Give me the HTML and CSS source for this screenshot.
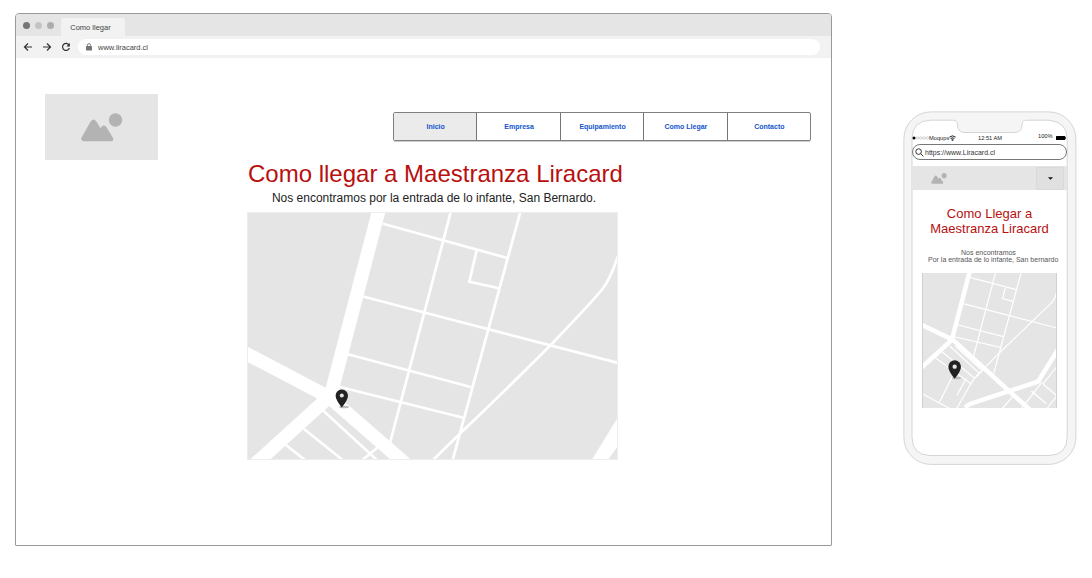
FILE: index.html
```html
<!DOCTYPE html>
<html lang="es">
<head>
<meta charset="utf-8">
<title>Como llegar</title>
<link rel="stylesheet" href="styles.css">
</head>
<body>
<main class="board">
  <section class="browser">
    <header class="tabbar">
      <span class="dot dot-dark"></span><span class="dot dot-light"></span><span class="dot dot-mid"></span>
      <span class="tab">Como llegar</span>
    </header>
    <div class="toolbar">
      <svg class="tool" viewBox="0 0 10 10"><path d="M9 5H1.5M5 1.5L1.5 5L5 8.5"/></svg>
      <svg class="tool" viewBox="0 0 10 10"><path d="M1 5H8.5M5 1.5L8.5 5L5 8.5"/></svg>
      <svg class="tool" viewBox="0 0 10 10"><path d="M8 3A3.5 3.5 0 1 0 8.4 6"/><path class="solid" d="M8.9 .9V4.5H5.3z"/></svg>
      <div class="address">
        <svg class="lock" viewBox="0 0 6 8"><rect x="0" y="3" width="6" height="4.6" rx=".6"/><path d="M1.4 3.2V2.2a1.6 1.6 0 0 1 3.2 0V3.2"/></svg>
        <span class="url">www.liracard.cl</span>
      </div>
    </div>
    <div class="page">
      <div class="masthead">
        <div class="logo">
          <svg class="logo-art" viewBox="0 0 42 29"><circle cx="34.5" cy="7" r="6.7"/><path d="M.7 24.2L9.8 8.2Q12.5 4.7 15.2 8.2L19.5 15.2L21 13.3Q23.2 11.6 25 13.6L32 25Q33 28.3 29.8 28.3H3Q-.9 27.8 .7 24.2z"/></svg>
        </div>
        <nav class="menu">
          <a class="item active">Inicio</a><a class="item">Empresa</a><a class="item">Equipamiento</a><a class="item">Como Llegar</a><a class="item">Contacto</a>
        </nav>
      </div>
      <h1 class="title">Como llegar a Maestranza Liracard</h1>
      <p class="lead">Nos encontramos por la entrada de lo infante, San Bernardo.</p>
      <svg class="map" viewBox="0 0 371 248">
        <rect class="land" x=".5" y=".5" width="370" height="247"/>
        <g class="avenue">
          <path d="M132 -2L84 182"/><path d="M-2 141L82 185L160 253"/><path d="M7 253L82 185"/>
        </g>
        <g class="street">
          <path d="M136 11.7L260.3 46"/><path d="M116 84.5L371 151"/><path d="M100 142L223.7 175"/><path d="M92 174.7L216.3 205.7"/>
          <path d="M204 -1L143 231"/><path d="M273.6 -1L205.4 249"/><path d="M229.7 38.3L222.3 69.7L252 76.3"/>
          <path d="M371 44Q363 68 355 77.5Q345 90 303.7 133Q270 167 212.3 222.3L185 249"/>
          <path d="M76.3 198.7L131 249"/><path d="M57 217L97 249"/><path d="M38 232.3L58 248"/><path d="M130 236L114 249"/>
        </g>
        <path class="paved" d="M370.5 206L370.5 234.7L361.3 247.5H345z"/>
        <rect class="edge" x=".5" y=".5" width="370" height="247"/>
        <ellipse class="shade" cx="97" cy="195" rx="5" ry="1.3"/>
        <path class="pin" d="M94.8 195.5Q88.6 188 88.6 183.6A6.2 6.2 0 0 1 101 183.6Q101 188 94.8 195.5z"/>
        <circle class="hole" cx="94.8" cy="183.6" r="2"/>
      </svg>
    </div>
  </section>

  <section class="phone">
    <svg class="shell" viewBox="0 0 174 354">
      <rect class="body" x=".9" y=".9" width="172" height="352.5" rx="27"/>
      <path class="screen-edge" d="M27 9.2H50Q54.5 9.2 54.5 14Q54.5 21.5 62 21.5H111Q119 21.5 119 14Q119 9.2 123.5 9.2H146Q164.2 11 164.2 28V326Q164.2 344 146 344.5H27Q9 344 9 326V28Q9 10 27 9.2z"/>
    </svg>
    <div class="screen">
      <div class="status">
        <span class="carrier"><svg class="signal" viewBox="0 0 17 4"><circle class="on" cx="2" cy="2" r="1.5"/><circle cx="5.5" cy="2" r="1.3"/><circle cx="8.8" cy="2" r="1.3"/><circle cx="12" cy="2" r="1.3"/><circle cx="15.2" cy="2" r="1.3"/></svg>Moqups<svg class="wifi" viewBox="0 0 7 6"><path d="M.4 2.1Q3.5 -.4 6.6 2.1M1.6 3.5Q3.5 2 5.4 3.5"/><circle cx="3.5" cy="4.9" r=".7"/></svg></span>
        <span class="clock">12:51 AM</span>
        <span class="charge">100%</span>
        <svg class="battery" viewBox="0 0 10 4"><rect width="9.2" height="4" rx=".5"/><rect x="9.3" y="1" width=".7" height="2"/></svg>
      </div>
      <div class="search">
        <svg class="glass" viewBox="0 0 9 9"><circle cx="3.6" cy="3.6" r="2.8"/><path d="M5.7 5.7L8.4 8.4"/></svg>
        <span>https://www.Liracard.cl</span>
      </div>
      <div class="appbar">
        <svg class="mini-logo" viewBox="0 0 42 29"><circle cx="34.5" cy="7" r="6.7"/><path d="M.7 24.2L9.8 8.2Q12.5 4.7 15.2 8.2L19.5 15.2L21 13.3Q23.2 11.6 25 13.6L32 25Q33 28.3 29.8 28.3H3Q-.9 27.8 .7 24.2z"/></svg>
        <span class="dropdown"><svg class="caret" viewBox="0 0 6 3"><path d="M0 0H6L3 3z"/></svg></span>
      </div>
      <h2 class="mobile-title">Como Llegar a<br>Maestranza Liracard</h2>
      <p class="mobile-lead"><span class="first">Nos encontramos</span><span>Por la entrada de lo infante, San bernardo</span></p>
      <svg class="mobile-map" viewBox="0 0 405 405">
        <rect class="land" width="405" height="405"/>
        <g class="avenue">
          <path d="M143 -4L90 199"/><path d="M-4 154L92 200L263 356L324 410"/><path d="M-4 286L88 202"/>
          <path d="M130 404Q138 393 165 386L348 326L409 228"/>
        </g>
        <g class="street">
          <path d="M146 14L283 50"/><path d="M124 92L405 165"/><path d="M108 156L245 191"/><path d="M100 192L238 224"/>
          <path d="M221 -3L155 249"/><path d="M298 -3L215 302"/><path d="M250 44L242 77L273 85"/>
          <path d="M405 55Q398 82 386 92L330 146L240 232L165 307Q150 324 142 340L104 407"/>
          <path d="M83 219L173 302"/><path d="M100 219L182 294"/><path d="M60 236L158 316"/><path d="M40 254L146 332"/><path d="M180 294L162 312"/>
          <path d="M53 387L90 312"/><path d="M-2 361L84 407"/><path d="M105 367L133 316"/>
          <path d="M296 410L361 326"/><path d="M405 280L363 333L409 372"/><path d="M328 354L373 392"/><path d="M242 405L274 369"/><path d="M376 405L405 368"/>
        </g>
        <ellipse class="shade" cx="104" cy="315" rx="14" ry="4"/>
        <path class="pin" d="M98 317Q79 294 79 281A19 19 0 0 1 117 281Q117 294 98 317z"/>
        <circle class="hole" cx="98" cy="281" r="6.5"/>
        <path class="sides" d="M1.5 0V405M403.5 0V405"/>
      </svg>
    </div>
  </section>
</main>
</body>
</html>
```
FILE: styles.css
```css
* { box-sizing: border-box; }
body { margin: 0; background: #fff; font-family: "Liberation Sans", Arial, sans-serif; }
svg { display: block; flex: none; }
h1, h2, p { margin: 0; font-weight: 400; white-space: nowrap; }
.board { width: 1092px; height: 578px; padding: 13px 0 0 15px; display: flex; align-items: flex-start; overflow: hidden; }

.browser { width: 817px; height: 533px; flex: none; border: 1px solid #999; border-radius: 4px 4px 1px 1px; overflow: hidden; }
.tabbar { height: 22px; background: #e5e5e5; display: flex; align-items: center; padding-left: 7px; }
.dot { width: 7px; height: 7px; border-radius: 50%; margin-right: 5px; }
.dot-dark { background: #757575; }
.dot-light { background: #c4c4c4; }
.dot-mid { background: #adadad; }
.tab { align-self: flex-end; width: 64px; height: 18px; margin-left: 2px; background: #f2f2f2; border-radius: 2px 2px 0 0; font-size: 7.5px; line-height: 19px; text-align: center; padding-right: 5px; color: #444; }
.toolbar { height: 22px; background: #f2f2f2; display: flex; align-items: center; padding-left: 7px; }
.tool { width: 10px; height: 10px; margin-right: 9px; fill: none; stroke: #333; stroke-width: 1.2; }
.tool .solid { fill: #333; stroke: none; }
.address { width: 742px; height: 16px; margin-left: -2px; border-radius: 8px; background: #fff; display: flex; align-items: center; padding-left: 8px; }
.lock { width: 6px; height: 8px; fill: #757575; }
.lock path { fill: none; stroke: #757575; stroke-width: .9; }
.url { font-size: 7.5px; color: #444; margin-left: 6px; }

.masthead { display: flex; padding: 36px 0 0 29px; align-items: flex-start; }
.logo { width: 113px; height: 66px; background: #e5e5e5; display: flex; padding: 19px 0 0 36px; }
.logo-art { width: 42px; height: 29px; fill: #b3b3b3; }
.menu { margin: 18px 0 0 235px; width: 418px; height: 29px; display: flex; border: 1px solid #808080; border-radius: 2px; box-shadow: 0 1px 0 #ccc; }
.item { flex: 1; text-align: center; font-size: 7px; font-weight: 700; line-height: 28px; color: #1155cc; padding-left: 1px; }
.item + .item { border-left: 1px solid #757575; }
.active { background: #ebebeb; }
.title { width: 374px; margin: 0 0 0 232px; font-size: 24px; line-height: 27px; color: #b80f0f; }
.lead { width: 374px; margin-left: 231px; text-align: center; font-size: 12px; line-height: 14px; color: #222; padding-top: 4px; }
.map { width: 371px; height: 248px; margin: 7px 0 0 231px; }

.land { fill: #e5e5e5; }
.avenue { fill: none; stroke: #fff; stroke-width: 13.5; }
.street { fill: none; stroke: #fff; stroke-width: 2.7; }
.paved { fill: #fff; }
.edge { fill: none; stroke: #ededed; }
.shade { fill: #bdbdbd; }
.pin { fill: #222; }
.hole { fill: #e5e5e5; }

.phone { width: 174px; height: 354px; flex: none; margin: 98px 0 0 70.5px; display: grid; }
.shell, .screen { grid-area: 1 / 1; }
.shell { width: 174px; height: 354px; }
.body { fill: #f5f5f5; stroke: #d5d5d5; }
.screen-edge { fill: #fff; stroke: #d5d5d5; }
.screen { width: 155px; margin-left: 9.5px; padding-top: 23px; display: flex; flex-direction: column; }
.status { height: 8px; display: flex; font-size: 5.7px; line-height: 8px; color: #222; white-space: nowrap; align-items: center; }
.carrier { width: 66px; display: flex; align-items: center; }
.signal { width: 17px; height: 4px; fill: none; stroke: #999; stroke-width: .4; }
.signal .on { fill: #000; stroke: none; }
.wifi { width: 7px; height: 6px; fill: none; stroke: #222; stroke-width: 1; }
.clock { width: 60px; }
.charge { width: 17px; margin-top: -4px; }
.battery { width: 10px; height: 4px; fill: #000; margin-left: 1px; }
.search { height: 16px; margin-top: 2px; border: 1px solid #777; border-radius: 8px; display: flex; align-items: center; padding-left: 2px; font-size: 7px; color: #333; gap: 1px; }
.glass { width: 9px; height: 9px; fill: none; stroke: #333; stroke-width: 1; }
.appbar { height: 24px; margin-top: 6px; background: #e5e5e5; display: flex; align-items: center; justify-content: space-between; padding: 0 3px 0 19px; }
.mini-logo { width: 16px; height: 11px; fill: #b3b3b3; }
.dropdown { width: 28px; height: 23px; border: 1px solid #d9d9d9; border-radius: 2px; background: #e0e0e0; display: flex; align-items: center; justify-content: center; }
.caret { width: 5px; height: 3px; fill: #111; }
.mobile-title { margin-top: 16px; font-size: 13px; line-height: 15px; text-align: center; color: #b80f0f; }
.mobile-lead { width: 131px; margin: 13px 0 0 16px; font-size: 7px; line-height: 7px; color: #555; display: flex; flex-direction: column; }
.first { padding-left: 33px; }
.mobile-map { width: 135px; height: 135px; margin: 10px 0 0 10px; }
.mobile-map .street { stroke-width: 3.6; }
.sides { stroke: #d0d0d0; stroke-width: 3; }
```
